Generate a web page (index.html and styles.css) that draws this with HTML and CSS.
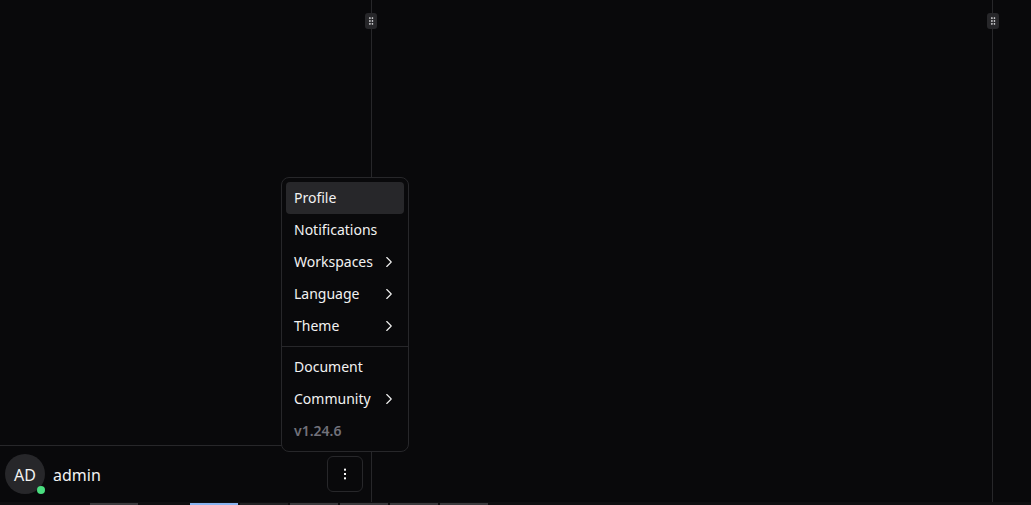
FILE: index.html
```html
<!DOCTYPE html>
<html lang="en">
<head>
<meta charset="utf-8">
<title>Admin</title>
<link rel="stylesheet" href="styles.css">
</head>
<body>
<div class="app">
  <div class="panels">
    <aside class="sidebar">
      <div class="sidebar-body"></div>
      <div class="user-bar">
        <div class="avatar">AD<span class="status"></span></div>
        <span class="user-name">admin</span>
        <button class="more" type="button" aria-label="More">
          <svg width="16" height="16" viewBox="0 0 24 24" fill="currentColor"><rect x="10.5" y="4" width="3" height="3"/><rect x="10.5" y="10.5" width="3" height="3"/><rect x="10.5" y="17" width="3" height="3"/></svg>
        </button>
      </div>
      <div class="handle"><svg class="grip" width="10" height="10" viewBox="0 0 24 24"><circle cx="9" cy="12" r="1"/><circle cx="9" cy="5" r="1"/><circle cx="9" cy="19" r="1"/><circle cx="15" cy="12" r="1"/><circle cx="15" cy="5" r="1"/><circle cx="15" cy="19" r="1"/></svg></div>
    </aside>
    <section class="content">
      <div class="handle handle-end"><svg class="grip" width="10" height="10" viewBox="0 0 24 24"><circle cx="9" cy="12" r="1"/><circle cx="9" cy="5" r="1"/><circle cx="9" cy="19" r="1"/><circle cx="15" cy="12" r="1"/><circle cx="15" cy="5" r="1"/><circle cx="15" cy="19" r="1"/></svg></div>
    </section>
    <div class="rest"></div>
  </div>
  <div class="tabs">
    <span class="tab"></span>
    <span class="tab tab-active"></span>
    <span class="tab tab-dim"></span>
    <span class="tab"></span>
    <span class="tab"></span>
    <span class="tab"></span>
    <span class="tab"></span>
  </div>
  <nav class="menu">
    <div class="menu-item menu-item-hover">Profile</div>
    <div class="menu-item">Notifications</div>
    <div class="menu-item">Workspaces<svg class="chev" width="18" height="18" viewBox="0 0 24 24"><path d="m9 18 6-6-6-6"/></svg></div>
    <div class="menu-item">Language<svg class="chev" width="18" height="18" viewBox="0 0 24 24"><path d="m9 18 6-6-6-6"/></svg></div>
    <div class="menu-item">Theme<svg class="chev" width="18" height="18" viewBox="0 0 24 24"><path d="m9 18 6-6-6-6"/></svg></div>
    <div class="menu-sep"></div>
    <div class="menu-item">Document</div>
    <div class="menu-item">Community<svg class="chev" width="18" height="18" viewBox="0 0 24 24"><path d="m9 18 6-6-6-6"/></svg></div>
    <div class="menu-item menu-version">v1.24.6</div>
  </nav>
</div>
</body>
</html>
```

FILE: styles.css
```css
* { box-sizing: border-box; }
html, body { margin: 0; padding: 0; height: 100%; }
body {
  background: #09090b;
  color: #f2f2f2;
  font-family: "Noto Sans", sans-serif;
  font-size: 14px;
  overflow: hidden;
}
.app {
  position: relative;
  width: 1031px;
  height: 505px;
  display: flex;
  flex-direction: column;
}
.panels { flex: 1; display: flex; min-height: 0; }
.sidebar {
  position: relative;
  width: 372px;
  border-right: 1px solid #27272a;
  display: flex;
  flex-direction: column;
}
.sidebar-body { flex: 1; }
.user-bar {
  height: 57px;
  border-top: 1px solid #27272a;
  padding: 0 8px 0 5px;
  display: flex;
  align-items: center;
  gap: 8px;
}
.avatar {
  position: relative;
  width: 40px;
  height: 40px;
  border-radius: 50%;
  background: #27272a;
  display: flex;
  align-items: center;
  justify-content: center;
  font-size: 16px;
  line-height: 24px;
  padding-top: 1px;
}
.status {
  position: absolute;
  right: 0;
  bottom: 0;
  width: 8px;
  height: 8px;
  border-radius: 50%;
  background: #4ade80;
}
.user-name { font-size: 16px; line-height: 24px; padding-top: 2px; flex: 1; }
.more {
  width: 36px;
  height: 36px;
  padding: 0;
  background: transparent;
  border: 1px solid #27272a;
  border-radius: 6px;
  color: #fafafa;
  display: flex;
  align-items: center;
  justify-content: center;
}
.content {
  position: relative;
  width: 621px;
  border-right: 1px solid #27272a;
}
.rest { flex: 1; }
.handle {
  position: absolute;
  top: 13px;
  right: -6px;
  width: 12px;
  height: 16px;
  border-radius: 3px;
  background: #27272a;
  display: flex;
  align-items: center;
  justify-content: center;
}
.handle-end { right: -7px; }
.grip {
  fill: none;
  stroke: #e4e4e7;
  stroke-width: 2;
  stroke-linecap: round;
  stroke-linejoin: round;
}
.tabs {
  height: 3px;
  background: #0f0f11;
  padding: 1px 0 0 90px;
  display: flex;
  gap: 2px;
}
.tab { width: 48px; background: #3a3a3d; }
.tab:first-child { margin-right: 50px; }
.tab-active { background: #8ab4f0; }
.tab-dim { background: #222224; }
.menu {
  position: absolute;
  left: 281px;
  top: 177px;
  width: 128px;
  padding: 4px;
  background: #09090b;
  border: 1px solid #27272a;
  border-radius: 8px;
}
.menu-item {
  height: 32px;
  padding: 0 8px 2px;
  border-radius: 4px;
  display: flex;
  align-items: center;
  white-space: nowrap;
}
.menu-item-hover { background: #27272a; }
.menu-version { color: #71717a; font-weight: 600; }
.menu-sep { height: 1px; margin: 4px -4px; background: #27272a; }
.chev {
  margin-left: auto;
  margin-right: -2px;
  position: relative;
  top: 1px;
  fill: none;
  stroke: currentColor;
  stroke-width: 1.5;
  stroke-linecap: round;
  stroke-linejoin: round;
}
```
